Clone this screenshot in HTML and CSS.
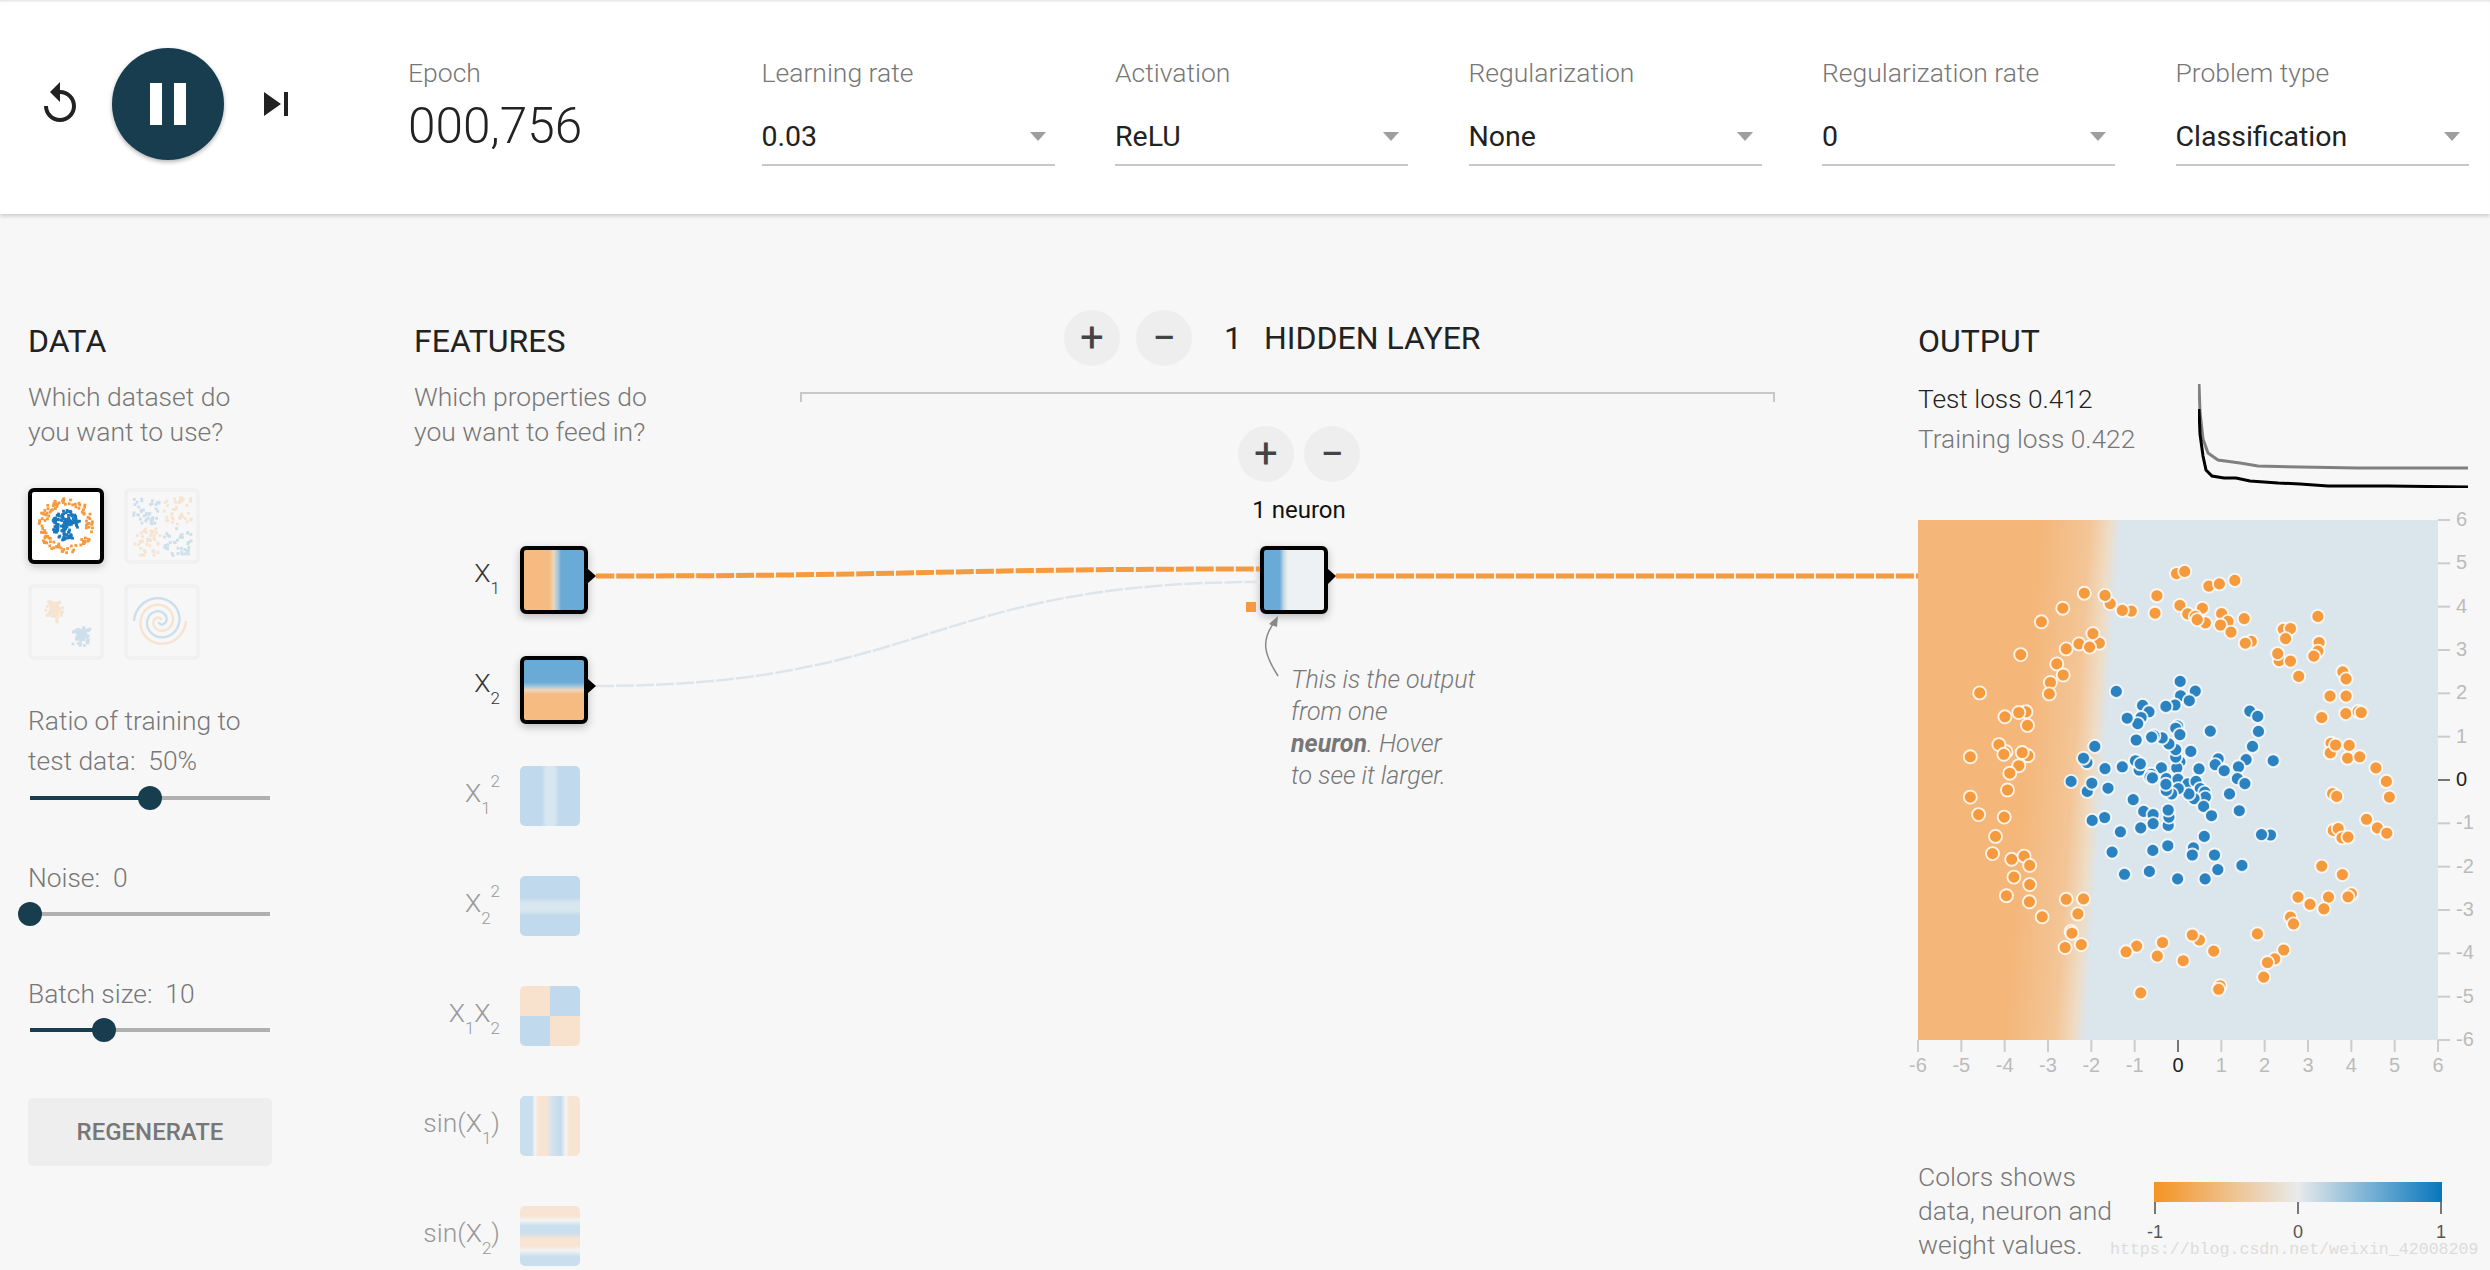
FILE: index.html
```html
<!DOCTYPE html>
<html lang="en">
<head>
    <meta charset="UTF-8">
    <title>Tinker With a Neural Network</title>
    <link rel="stylesheet" href="styles.css">
</head>
<body>
    <header class="top">
        <div class="player">
            <svg class="icon" viewBox="0 0 24 24"><path d="M12 5V1L7 6l5 5V7c3.31 0 6 2.69 6 6s-2.69 6-6 6-6-2.69-6-6H4c0 4.42 3.58 8 8 8s8-3.58 8-8-3.58-8-8-8z"/></svg>
            <div class="play">
                <svg viewBox="0 0 24 24"><path d="M6 19h4V5H6v14zm8-14v14h4V5h-4z"/></svg>
            </div>
            <svg class="icon" viewBox="0 0 24 24"><path d="M6 18l8.5-6L6 6v12zM16 6v12h2V6h-2z"/></svg>
        </div>
        <div class="controls">
            <div class="control">
                <div class="control-label">Epoch</div>
                <div class="epoch">000,756</div>
            </div>
            <div class="control">
                <div class="control-label">Learning rate</div>
                <div class="select">0.03</div>
            </div>
            <div class="control">
                <div class="control-label">Activation</div>
                <div class="select">ReLU</div>
            </div>
            <div class="control">
                <div class="control-label">Regularization</div>
                <div class="select">None</div>
            </div>
            <div class="control">
                <div class="control-label">Regularization rate</div>
                <div class="select">0</div>
            </div>
            <div class="control">
                <div class="control-label">Problem type</div>
                <div class="select">Classification</div>
            </div>
        </div>
    </header>

    <main class="main">
        <section class="data">
            <h4 class="title">DATA</h4>
            <p class="desc">Which dataset do<br>you want to use?</p>
            <div class="datasets">
                <svg class="dataset selected" id="dsCircle" viewBox="0 0 68 68"></svg>
                <svg class="dataset" id="dsXor" viewBox="0 0 68 68"></svg>
                <svg class="dataset" id="dsGauss" viewBox="0 0 68 68"></svg>
                <svg class="dataset" id="dsSpiral" viewBox="0 0 68 68"></svg>
            </div>
            <div class="option first">
                <label class="option-label">Ratio of training to<br>test data:&nbsp; 50%</label>
                <div class="slider"><div class="fill" style="width: 50%"></div><div class="handle" style="left: 50%"></div></div>
            </div>
            <div class="option">
                <label class="option-label">Noise:&nbsp; 0</label>
                <div class="slider"><div class="fill" style="width: 0%"></div><div class="handle" style="left: 0%"></div></div>
            </div>
            <div class="option">
                <label class="option-label">Batch size:&nbsp; 10</label>
                <div class="slider"><div class="fill" style="width: 31%"></div><div class="handle" style="left: 31%"></div></div>
            </div>
            <div class="regen">REGENERATE</div>
        </section>

        <section class="features">
            <h4 class="title">FEATURES</h4>
            <p class="desc">Which properties do<br>you want to feed in?</p>
            <div class="feature-list">
                <div class="feature on">
                    <div class="feature-label">X<sub>1</sub></div>
                    <div class="box box-x1"></div>
                </div>
                <div class="feature on">
                    <div class="feature-label">X<sub>2</sub></div>
                    <div class="box box-x2"></div>
                </div>
                <div class="feature">
                    <div class="feature-label">X<sub>1</sub><sup>2</sup></div>
                    <div class="box box-x1sq"></div>
                </div>
                <div class="feature">
                    <div class="feature-label">X<sub>2</sub><sup>2</sup></div>
                    <div class="box box-x2sq"></div>
                </div>
                <div class="feature">
                    <div class="feature-label">X<sub>1</sub>X<sub>2</sub></div>
                    <div class="box box-x1x2"></div>
                </div>
                <div class="feature">
                    <div class="feature-label">sin(X<sub>1</sub>)</div>
                    <div class="box box-sin1"></div>
                </div>
                <div class="feature">
                    <div class="feature-label">sin(X<sub>2</sub>)</div>
                    <div class="box box-sin2"></div>
                </div>
            </div>
        </section>

        <section class="network">
            <div class="network-head">
                <div class="round-btn">+</div>
                <div class="round-btn">&minus;</div>
                <span class="layer-count">1</span>
                <span class="layer-name">HIDDEN LAYER</span>
            </div>
            <div class="bracket"></div>
            <div class="layer">
                <div class="layer-btns">
                    <div class="round-btn">+</div>
                    <div class="round-btn">&minus;</div>
                </div>
                <div class="neuron-count">1 neuron</div>
                <div class="box box-neuron"></div>
            </div>
            <p class="callout">This is the output<br>from one<br><b>neuron</b>. Hover<br>to see it larger.</p>
        </section>

        <section class="output">
            <h4 class="title">OUTPUT</h4>
            <div class="stats">
                <div class="losses">
                    <div class="loss-test">Test loss 0.412</div>
                    <div class="loss-train">Training loss 0.422</div>
                </div>
                <svg class="loss-chart" viewBox="0 0 270 104">
                    <path class="train-line" d="M1 0 L2 28 L5 55 L10 69 L20 76 L42 79 L60 82 L102 83 L160 84 L270 84"/>
                    <path class="test-line" d="M1 25 L2 50 L5 72 L8 86 L14 92 L26 94 L38 94 L52 97 L80 99 L102 100 L130 102 L190 102 L270 103"/>
                </svg>
            </div>
            <svg class="plot" id="plot" viewBox="0 0 572 560"></svg>
            <div class="legend">
                <p class="legend-text">Colors shows<br>data, neuron and<br>weight values.</p>
                <div class="scale">
                    <div class="scale-bar"></div>
                    <div class="scale-ticks">
                        <div class="scale-tick"><i></i><span>-1</span></div>
                        <div class="scale-tick"><i></i><span>0</span></div>
                        <div class="scale-tick"><i></i><span>1</span></div>
                    </div>
                </div>
            </div>
        </section>
    </main>

    <svg class="links" viewBox="0 0 2490 1270">
        <path class="link-on" d="M596 576 C928 576 928 569 1260 569"/>
        <path class="link-off" d="M596 686 C928 686 928 582 1260 582"/>
        <path class="link-on" d="M1336 576 L1918 576"/>
        <polygon points="588,569 596,576 588,583"/>
        <polygon points="588,679 596,686 588,693"/>
        <polygon points="1328,569 1336,576 1328,584"/>
        <rect class="link-weight" x="1246" y="602" width="10" height="10"/>
        <path class="callout-arrow" d="M1278 676 C1264 654 1260 640 1276 620"/>
        <polygon class="callout-head" points="1278,616 1269,624 1277,627"/>
    </svg>

    <div class="watermark">https://blog.csdn.net/weixin_42008209</div>

    <script src="script.js"></script>
</body>
</html>
```

FILE: styles.css
```css
* {
    margin: 0;
    padding: 0;
    box-sizing: border-box;
}
body {
    width: 2490px;
    height: 1270px;
    overflow: hidden;
    position: relative;
    background-color: #f7f7f7;
    font-family: Roboto, "Liberation Sans", sans-serif;
    font-weight: 300;
    color: #777;
}

/* top bar */
.top {
    display: flex;
    height: 214px;
    background-color: #fff;
    box-shadow: 0 2px 4px rgba(0, 0, 0, 0.18), inset 0 3px 3px -2px #ddd;
    position: relative;
}
.player {
    display: flex;
    align-items: center;
    height: 208px;
    width: 372px;
    margin-left: 36px;
}
.icon {
    width: 48px;
    height: 48px;
    fill: #222;
}
.play {
    width: 112px;
    height: 112px;
    margin: 0 28px;
    border-radius: 50%;
    background-color: #183d4e;
    box-shadow: 0 2px 4px rgba(0, 0, 0, 0.3);
    display: flex;
    align-items: center;
    justify-content: center;
}
.play svg {
    width: 72px;
    height: 72px;
    fill: #fff;
}
.controls {
    display: flex;
    gap: 60.5px;
}
.control {
    width: 293px;
    padding-top: 56px;
}
.control-label {
    font-size: 26.5px;
    line-height: 34px;
}
.epoch {
    font-size: 49.5px;
    line-height: 56px;
    margin-top: 8px;
    color: #222;
}
.select {
    position: relative;
    height: 50px;
    margin-top: 26px;
    line-height: 42px;
    font-size: 28.5px;
    font-weight: 400;
    color: #222;
    border-bottom: 2px solid #c8c8c8;
}
.select::after {
    content: "";
    position: absolute;
    right: 9px;
    top: 16px;
    border-left: 8.5px solid transparent;
    border-right: 8.5px solid transparent;
    border-top: 9px solid #9e9e9e;
}

/* columns */
.main {
    display: flex;
    padding: 95px 0 0 28px;
}
.title {
    font-size: 32px;
    font-weight: 400;
    line-height: 36px;
    margin-top: 14px;
    color: #222;
}
.desc {
    font-size: 26.5px;
    line-height: 35px;
    margin-top: 20px;
}
.data {
    width: 386px;
}
.features {
    width: 386px;
}
.datasets {
    display: grid;
    grid-template-columns: 76px 76px;
    gap: 20px;
    margin-top: 39px;
}
.dataset {
    width: 76px;
    height: 76px;
    border: 4px solid #f1f1f1;
    border-radius: 6px;
}
.dataset g {
    opacity: 0.2;
}
.dataset.selected {
    border-color: #000;
    background-color: #fff;
    box-shadow: 0 3px 8px rgba(0, 0, 0, 0.2);
}
.dataset.selected g {
    opacity: 1;
}
.option {
    width: 244px;
    margin-top: 44px;
    padding-bottom: 14px;
}
.option.first {
    margin-top: 41px;
}
.option-label {
    display: block;
    font-size: 26.4px;
    line-height: 40px;
}
.slider {
    position: relative;
    width: 240px;
    height: 4px;
    margin: 14px 0 0 2px;
    background-color: #b0b0b0;
}
.first .slider {
    margin-top: 15px;
}
.fill {
    height: 4px;
    background-color: #183d4e;
}
.handle {
    position: absolute;
    top: -10px;
    width: 24px;
    height: 24px;
    margin-left: -12px;
    border-radius: 50%;
    background-color: #183d4e;
}
.regen {
    width: 244px;
    height: 68px;
    margin-top: 52px;
    border-radius: 5px;
    background-color: #eee;
    font-size: 24px;
    font-weight: 500;
    line-height: 68px;
    text-align: center;
}

/* features */
.feature-list {
    margin-top: 97px;
}
.feature {
    display: flex;
    height: 110px;
    color: #999;
}
.feature.on {
    color: #333;
}
.feature-label {
    width: 86px;
    margin-right: 20px;
    padding-top: 13px;
    font-size: 26.5px;
    line-height: 27px;
    text-align: right;
    white-space: nowrap;
}
.feature-label sub,
.feature-label sup {
    font-size: 17px;
    line-height: 0;
}
.feature-label sub {
    vertical-align: -12px;
}
.feature-label sup {
    vertical-align: 15px;
}
.box {
    width: 60px;
    height: 60px;
    border-radius: 5px;
}
.on .box,
.box-neuron {
    width: 68px;
    height: 68px;
    border: 4px solid #000;
    border-radius: 6px;
    box-shadow: 0 3px 8px rgba(0, 0, 0, 0.25);
}
.box-x1 {
    background: linear-gradient(90deg, #f5bb80 42%, #edd6bb 49%, #a9c9dd 56%, #6aaad6 62%);
}
.box-x2 {
    background: linear-gradient(180deg, #6aaad6 37%, #a9c9dd 45%, #f0d6ba 50%, #f5bb80 57%);
}
.box-x1sq {
    background: linear-gradient(90deg, #c1d9ec 36%, #d8e6ef 44%, #d8e6ef 57%, #c1d9ec 65%);
}
.box-x2sq {
    background: linear-gradient(180deg, #c1d9ec 36%, #d8e6ef 44%, #d8e6ef 58%, #c1d9ec 66%);
}
.box-x1x2 {
    background: conic-gradient(#c1d9ec 0 25%, #f8e2cd 0 50%, #c1d9ec 0 75%, #f8e2cd 0);
}
.box-sin1 {
    background: linear-gradient(90deg, #c9dfed 20%, #f3f3f2 25%, #f8e4d2 31%, #f8e4d2 45%, #d5e4ee 52%, #c4dbec 68%, #f3f3f2 76%, #f8e4d2 82%);
}
.box-sin2 {
    background: linear-gradient(180deg, #f8e4d2 17%, #f3f3f2 24%, #c9dfed 33%, #c9dfed 45%, #f8e4d2 54%, #f8e4d2 66%, #f3f3f2 74%, #c9dfed 84%);
}

/* network */
.network {
    width: 975px;
}
.network-head {
    display: flex;
    align-items: center;
    gap: 16px;
    height: 57px;
    margin-left: 264px;
    color: #222;
}
.round-btn {
    width: 56px;
    height: 56px;
    border-radius: 50%;
    background-color: #eee;
    color: #444;
    font-size: 42px;
    font-weight: 400;
    line-height: 56px;
    text-align: center;
}
.layer-count {
    margin-left: 16px;
    font-size: 32px;
    font-weight: 400;
}
.layer-name {
    margin-left: 6px;
    font-size: 32px;
    font-weight: 400;
}
.bracket {
    height: 10px;
    margin-top: 26px;
    border: 2px solid #c8c8c8;
    border-bottom: 0;
}
.layer {
    width: 122px;
    margin: 24px 0 0 438px;
}
.layer-btns {
    display: flex;
    gap: 10px;
}
.neuron-count {
    margin-top: 14px;
    font-size: 24px;
    font-weight: 400;
    line-height: 28px;
    text-align: center;
    color: #111;
}
.box-neuron {
    margin: 22px 0 0 22px;
    background: linear-gradient(90deg, #6aaad6 26%, #c5d9e6 33%, #eef1f3 40%);
}
.callout {
    margin: 50px 0 0 491px;
    font-size: 25px;
    font-style: italic;
    line-height: 32px;
}
.callout b {
    font-weight: 700;
}

/* output */
.output {
    width: 572px;
    margin-left: 143px;
}
.stats {
    display: flex;
    height: 110px;
    margin-top: 20px;
}
.losses {
    width: 280px;
    font-size: 26.3px;
    line-height: 40px;
}
.loss-test {
    color: #222;
}
.loss-chart {
    width: 270px;
    height: 104px;
    margin-top: 5px;
    fill: none;
}
.train-line {
    stroke: #808080;
    stroke-width: 3;
}
.test-line {
    stroke: #000;
    stroke-width: 3;
}
.plot {
    display: block;
    width: 572px;
    height: 560px;
    margin-top: 31px;
    overflow: visible;
}
.tick {
    stroke: #ccc;
    stroke-width: 2;
}
.tick.zero {
    stroke: #777;
}
.tick-label {
    font-family: "Liberation Sans", sans-serif;
    font-size: 20px;
    font-weight: 400;
    fill: #bbb;
    dominant-baseline: central;
}
.tick-label.zero {
    fill: #222;
}
.dot {
    stroke: #fff;
    stroke-width: 1.9;
    stroke-opacity: 0.85;
}
.legend {
    display: flex;
    margin-top: 80px;
}
.legend-text {
    width: 236px;
    font-size: 26.5px;
    line-height: 34px;
    white-space: nowrap;
}
.scale {
    width: 288px;
    margin-top: 22px;
}
.scale-bar {
    height: 20px;
    background: linear-gradient(90deg, #f59322, #e8eaeb 50%, #0877bd);
}
.scale-ticks {
    display: flex;
    justify-content: space-between;
}
.scale-tick {
    display: flex;
    flex-direction: column;
    align-items: center;
    width: 2px;
    font-family: "Liberation Sans", sans-serif;
    font-size: 18px;
    font-weight: 400;
    color: #555;
}
.scale-tick i {
    flex: none;
    width: 2px;
    height: 12px;
    background-color: #777;
}
.scale-tick span {
    margin-top: 8px;
}

/* overlays */
.links {
    position: absolute;
    left: 0;
    top: 0;
    width: 2490px;
    height: 1270px;
    pointer-events: none;
}
.link-on,
.link-off {
    fill: none;
    stroke-dasharray: 18 2;
}
.link-on {
    stroke: #f59a3d;
    stroke-width: 5;
}
.link-off {
    stroke: #dde5ec;
    stroke-width: 2.5;
}
.link-weight {
    fill: #f59a3d;
}
.callout-arrow {
    fill: none;
    stroke: #888;
    stroke-width: 1.5;
}
.callout-head {
    fill: #888;
}
.watermark {
    position: absolute;
    left: 2110px;
    top: 1240px;
    font-family: "Liberation Mono", monospace;
    font-size: 16.6px;
    font-weight: 400;
    line-height: 20px;
    color: #dcdcdc;
}
```

FILE: script.js
```js
// points read off the chart, in a 1382 x 1455 box with origin 48,28
const orange = [[735,178],[757,172],[821,213],[849,207],[890,197],[683,240],[744,267],[804,275],[855,290],[915,304],[872,312],[852,322],[880,342],[765,291],[785,298],[812,316],[790,307],[678,289],[615,283],[591,281],[559,262],[545,239],[490,233],[433,275],[376,313],[530,373],[513,346],[476,375],[504,384],[442,389],[321,405],[417,431],[434,462],[400,483],[397,515],[212,512],[335,565],[316,567],[279,579],[339,603],[282,677],[263,657],[276,684],[340,688],[325,679],[187,691],[316,716],[292,737],[286,784],[187,804],[209,853],[277,860],[254,914],[246,962],[297,978],[330,969],[345,995],[303,1028],[345,1049],[283,1080],[344,1097],[378,1139],[442,1090],[488,1089],[473,1131],[455,1180],[457,1185],[482,1217],[439,1225],
    [1111,298],[1019,334],[1038,332],[1025,360],[1114,371],[1111,395],[1100,409],[1008,422],[1004,402],[1038,423],[1060,466],[934,368],[918,373],[1177,453],[1186,473],[1143,521],[1186,521],[1121,581],[1185,570],[1218,564],[1226,567],[1146,653],[1144,680],[1158,658],[1194,659],[1190,695],[1222,691],[1265,722],[1293,760],[1301,804],[1150,794],[1161,802],[1240,866],[1269,890],[1294,905],[1152,897],[1165,892],[1175,918],[1191,916],[1121,997],[1176,1021],[1058,1084],[1090,1104],[1139,1084],[1127,1117],[1200,1075],[1191,1083],[1038,1140],[1046,1159],[950,1187],[1020,1232],[996,1257],[977,1267],[967,1308],[851,1332],[847,1342],[640,1352],[834,1235],[796,1204],[777,1190],[753,1262],[698,1211],[684,1249],[629,1221],[601,1237]];
const blue = [[745,480],[785,507],[746,520],[769,534],[731,546],[707,550],[575,508],[645,547],[662,565],[641,581],[632,598],[604,583],[738,605],[733,611],[744,629],[825,619],[930,563],[951,578],[953,620],[937,662],[992,702],[920,699],[900,719],[897,752],[917,766],[876,795],[902,842],[846,697],[838,713],[862,730],[795,725],[773,676],[744,705],[736,722],[733,692],[733,671],[695,722],[715,655],[697,638],[675,632],[669,636],[628,644],[518,662],[497,707],[488,695],[545,724],[591,719],[636,728],[626,702],[639,711],[668,740],[665,748],[671,750],[708,752],[739,754],[765,767],[787,760],[798,780],[810,790],[812,804],[782,808],[768,795],[740,780],[722,795],[708,785],[707,768],[455,760],[498,788],[510,765],[553,779],[620,811],[648,844],[673,853],[713,883],[715,860],[713,840],[673,878],[640,890],[544,861],[511,869],[586,901],[807,830],[828,856],[809,914],[712,940],[780,946],[777,966],[672,953],[564,958],[836,966],[845,1007],[909,995],[811,1033],[738,1033],[663,1012],[597,1020],[985,910],[961,909]];

const ORANGE = "#f59a3d";
const BLUE = "#2a82c0";
const SVGNS = "http://www.w3.org/2000/svg";

function el(parent, name, attrs, text){
    const node = document.createElementNS(SVGNS, name);
    for(const key in attrs){
        node.setAttribute(key, attrs[key]);
    }
    if(text !== undefined){
        node.textContent = text;
    }
    parent.appendChild(node);
    return node;
}

// small seeded random so the thumbnails stay the same on every load
let seed = 12345;
function rnd(){
    seed = (seed * 1664525 + 1013904223) % 4294967296;
    return seed / 4294967296;
}
function gauss(){
    return (rnd() + rnd() + rnd() - 1.5) / 0.5;
}

function square(group, x, y, color){
    el(group, "rect", {x: x.toFixed(1), y: y.toFixed(1), width: 2.8, height: 2.8, fill: color});
}

function drawCircle(){
    const g = el(document.querySelector("#dsCircle"), "g", {});
    for(let i = 0; i < 110; i++){
        const a = rnd() * Math.PI * 2;
        const r = 20 + rnd() * 8;
        square(g, 33 + r * Math.cos(a), 32 + r * Math.sin(a), ORANGE);
    }
    for(let i = 0; i < 120; i++){
        const a = rnd() * Math.PI * 2;
        const r = Math.sqrt(rnd()) * 15;
        square(g, 33 + r * Math.cos(a), 32 + r * Math.sin(a), "#1a78bd");
    }
}
function drawXor(){
    const g = el(document.querySelector("#dsXor"), "g", {});
    for(let i = 0; i < 160; i++){
        const x = 4 + rnd() * 27 + (i % 2) * 31;
        const y = 4 + rnd() * 27 + (i % 4 > 1 ? 31 : 0);
        const same = (x < 33) === (y < 33);
        square(g, x, y, same ? BLUE : ORANGE);
    }
}
function drawGauss(){
    const g = el(document.querySelector("#dsGauss"), "g", {});
    for(let i = 0; i < 70; i++){
        square(g, 22 + gauss() * 4.5, 22 + gauss() * 4.5, ORANGE);
        square(g, 46 + gauss() * 4.5, 47 + gauss() * 4.5, BLUE);
    }
}
function drawSpiral(){
    const svg = document.querySelector("#dsSpiral");
    [[BLUE, 0], [ORANGE, Math.PI]].forEach(function(item){
        const g = el(svg, "g", {fill: "none", "stroke-width": 2.4});
        let d = "";
        for(let t = 0; t <= 1; t += 0.01){
            const a = Math.PI + item[1] + t * 3.8 * Math.PI;
            const r = 25 * (1 - t) + 1;
            d += (t === 0 ? "M" : "L") + (32 + r * Math.cos(a)).toFixed(1) + " " + (33 + r * Math.sin(a)).toFixed(1);
        }
        el(g, "path", {d: d, stroke: item[0]});
    });
}

function drawPlot(){
    const svg = document.querySelector("#plot");
    const size = 520;
    const defs = el(svg, "defs", {});
    const grad = el(defs, "linearGradient", {id: "heat", gradientUnits: "userSpaceOnUse", x1: -18, y1: 241, x2: 538, y2: 279});
    [["0%", "#f4b679"], ["22%", "#f4b679"], ["31%", "#f3c596"], ["34.5%", "#efdcc4"], ["36.5%", "#dbe5ec"], ["100%", "#dbe5ec"]].forEach(function(stop){
        el(grad, "stop", {offset: stop[0], "stop-color": stop[1]});
    });
    el(svg, "rect", {width: size, height: size, fill: "url(#heat)"});

    const step = size / 12;
    for(let i = -6; i <= 6; i++){
        const zero = i === 0 ? " zero" : "";
        const x = (i + 6) * step;
        const y = (6 - i) * step;
        el(svg, "line", {class: "tick" + zero, x1: size, x2: size + 12, y1: y, y2: y});
        el(svg, "line", {class: "tick" + zero, y1: size, y2: size + 12, x1: x, x2: x});
        el(svg, "text", {class: "tick-label" + zero, x: size + 18, y: y - 1}, i);
        el(svg, "text", {class: "tick-label" + zero, x: x, y: size + 25, "text-anchor": "middle"}, i);
    }

    [[orange, ORANGE], [blue, BLUE]].forEach(function(set){
        set[0].forEach(function(p){
            el(svg, "circle", {
                class: "dot",
                cx: ((p[0] - 48) / 2.658).toFixed(1),
                cy: ((p[1] - 28) / 2.8).toFixed(1),
                r: 6.5,
                fill: set[1]
            });
        });
    });
}

drawCircle();
drawXor();
drawGauss();
drawSpiral();
drawPlot();
```
